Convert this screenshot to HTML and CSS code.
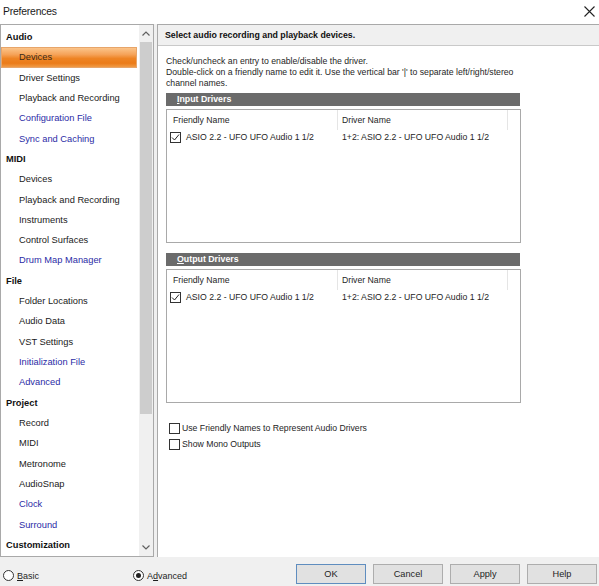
FILE: index.html
```html
<!DOCTYPE html>
<html>
<head>
<meta charset="utf-8">
<link rel="stylesheet" href="styles.css">
</head>
<body>
<div class="window">
  <div class="titlebar">
    <span class="title">Preferences</span>
    <svg class="close" width="11" height="11" viewBox="0 0 11 11"><path d="M0.5 0.5 L10.5 10.5 M10.5 0.5 L0.5 10.5" stroke="#222" stroke-width="1.1" fill="none"/></svg>
  </div>
  <div class="main">
    <div class="tree">
      <div class="tree-list">
        <div class="row head">Audio</div>
        <div class="row child selected">Devices</div>
        <div class="row child">Driver Settings</div>
        <div class="row child">Playback and Recording</div>
        <div class="row child link">Configuration File</div>
        <div class="row child link">Sync and Caching</div>
        <div class="row head">MIDI</div>
        <div class="row child">Devices</div>
        <div class="row child">Playback and Recording</div>
        <div class="row child">Instruments</div>
        <div class="row child">Control Surfaces</div>
        <div class="row child link">Drum Map Manager</div>
        <div class="row head">File</div>
        <div class="row child">Folder Locations</div>
        <div class="row child">Audio Data</div>
        <div class="row child">VST Settings</div>
        <div class="row child link">Initialization File</div>
        <div class="row child link">Advanced</div>
        <div class="row head">Project</div>
        <div class="row child">Record</div>
        <div class="row child">MIDI</div>
        <div class="row child">Metronome</div>
        <div class="row child">AudioSnap</div>
        <div class="row child link">Clock</div>
        <div class="row child link">Surround</div>
        <div class="row head">Customization</div>
      </div>
      <div class="scrollbar">
        <div class="arrow"><svg width="8" height="5" viewBox="0 0 8 5"><path d="M0.5 4.5 L4 1 L7.5 4.5" stroke="#606060" stroke-width="1.2" fill="none"/></svg></div>
        <div class="track"><div class="thumb"></div></div>
        <div class="arrow"><svg width="8" height="5" viewBox="0 0 8 5"><path d="M0.5 0.5 L4 4 L7.5 0.5" stroke="#606060" stroke-width="1.2" fill="none"/></svg></div>
      </div>
    </div>
    <div class="panel">
      <div class="panel-head">Select audio recording and playback devices.</div>
      <div class="panel-body">
        <p class="desc">Check/uncheck an entry to enable/disable the driver.<br>Double-click on a friendly name to edit it. Use the vertical bar '|' to separate left/right/stereo<br>channel names.</p>

        <div class="group-bar"><u>I</u>nput Drivers</div>
        <div class="listbox">
          <div class="list-head">
            <div class="col c1">Friendly Name</div>
            <div class="col c2">Driver Name</div>
            <div class="col c3"></div>
          </div>
          <div class="list-row">
            <div class="col c1"><span class="check on"><svg width="9" height="9" viewBox="0 0 9 9"><path d="M1 4.5 L3.5 7 L8 1.5" stroke="#222" stroke-width="1" fill="none"/></svg></span>ASIO 2.2 - UFO UFO Audio 1 1/2</div>
            <div class="col c2">1+2: ASIO 2.2 - UFO UFO Audio 1 1/2</div>
          </div>
        </div>

        <div class="group-bar out"><u>O</u>utput Drivers</div>
        <div class="listbox">
          <div class="list-head">
            <div class="col c1">Friendly Name</div>
            <div class="col c2">Driver Name</div>
            <div class="col c3"></div>
          </div>
          <div class="list-row">
            <div class="col c1"><span class="check on"><svg width="9" height="9" viewBox="0 0 9 9"><path d="M1 4.5 L3.5 7 L8 1.5" stroke="#222" stroke-width="1" fill="none"/></svg></span>ASIO 2.2 - UFO UFO Audio 1 1/2</div>
            <div class="col c2">1+2: ASIO 2.2 - UFO UFO Audio 1 1/2</div>
          </div>
        </div>

        <div class="options">
          <label class="opt"><span class="check"></span>Use Friendly Names to Represent Audio Drivers</label>
          <label class="opt"><span class="check"></span>Show Mono Outputs</label>
        </div>
      </div>
    </div>
  </div>
  <div class="bottom">
    <div class="radios">
      <label class="radio r-basic"><span class="dot"></span><u>B</u>asic</label>
      <label class="radio r-adv"><span class="dot on"></span>A<u>d</u>vanced</label>
    </div>
    <div class="buttons">
      <button class="btn default">OK</button>
      <button class="btn">Cancel</button>
      <button class="btn">Apply</button>
      <button class="btn">Help</button>
    </div>
  </div>
</div>
</body>
</html>
```
FILE: styles.css
```css
* { box-sizing: border-box; }
html, body { margin: 0; padding: 0; }
body {
  width: 599px;
  height: 586px;
  overflow: hidden;
  background: #f0f0f0;
  font-family: "Liberation Sans", Arial, sans-serif;
  color: #1e1e1e;
}
.window { width: 599px; height: 586px; display: flex; flex-direction: column; }

.titlebar {
  height: 24px;
  background: #ffffff;
  display: flex;
  align-items: center;
  justify-content: space-between;
  padding: 0 4px 1px 3px;
  flex: none;
}
.title { font-size: 10.4px; color: #1a1a1a; letter-spacing: -0.2px; }

.main { height: 533px; display: flex; flex: none; }

.tree {
  width: 154px;
  height: 533px;
  border: 1px solid #a9a9a9;
  background: #ffffff;
  display: flex;
  flex: none;
}
.tree-list { flex: 1; padding-top: 2px; overflow: hidden; }
.row {
  height: 20.32px;
  line-height: 20.32px;
  font-size: 9.3px;
  white-space: nowrap;
  color: #1a1a1a;
}
.row.head { font-weight: bold; padding-left: 5px; color: #111; }
.row.child { padding-left: 18px; }
.row.link { color: #2b2ba6; }
.row.selected {
  margin-right: 2px;
  background: linear-gradient(#fbc48a 0%, #f5a257 35%, #ee8424 55%, #eb7b18 80%, #f09a45 100%);
  border: 1px solid #e7a56a;
  line-height: 18.3px;
  padding-left: 17px;
  color: #3a2a1a;
}

.scrollbar {
  width: 14px;
  background: #f0f0f0;
  display: flex;
  flex-direction: column;
  flex: none;
}
.arrow { height: 17px; display: flex; align-items: center; justify-content: center; flex: none; }
.track { flex: 1; padding: 0 1px; }
.thumb { height: 372px; background: #cdcdcd; }

.panel {
  flex: 1;
  margin-left: 3px;
  background: #ffffff;
  border-left: 1px solid #a9a9a9;
  border-top: 1px solid #a9a9a9;
  display: flex;
  flex-direction: column;
}
.panel-head {
  height: 21px;
  background: #f0f0f0;
  border-bottom: 1px solid #c9c9c9;
  font-weight: bold;
  font-size: 8.8px;
  line-height: 20px;
  padding-left: 7px;
  color: #111;
}
.panel-body { padding: 10px 0 0 8px; }
.desc {
  margin: 0;
  font-size: 8.7px;
  line-height: 11px;
  color: #1e1e1e;
}
.group-bar {
  width: 354px;
  height: 13px;
  margin-top: 4px;
  background: #6b6b6b;
  color: #ffffff;
  font-weight: bold;
  font-size: 8.8px;
  line-height: 13px;
  padding-left: 11px;
}
.group-bar.out { margin-top: 10px; }
.listbox {
  width: 355px;
  height: 134px;
  margin-top: 3px;
  border: 1px solid #a9a9a9;
  background: #ffffff;
}
.list-head, .list-row { display: flex; font-size: 8.7px; }
.list-head { height: 20px; }
.list-head .col { line-height: 20px; border-right: 1px solid #e5e5e5; }
.list-head .c3 { border-right: none; }
.col { white-space: nowrap; }
.c1 { width: 171px; padding-left: 6px; }
.c2 { width: 170px; padding-left: 4px; }
.c3 { flex: 1; }
.list-row { height: 14px; line-height: 14px; }
.list-row .c1 { padding-left: 3px; display: flex; align-items: center; }

.check {
  width: 11px;
  height: 11px;
  border: 1px solid #333333;
  background: #ffffff;
  display: inline-flex;
  align-items: center;
  justify-content: center;
  margin-right: 5px;
  flex: none;
}
.options { margin-top: 17px; padding-left: 3px; }
.opt {
  display: flex;
  align-items: center;
  height: 16px;
  font-size: 8.7px;
  color: #1e1e1e;
}
.opt .check { margin-right: 2px; }

.bottom {
  flex: 1;
  display: flex;
  align-items: flex-start;
  justify-content: space-between;
  padding: 6px 2px 0 3px;
  border-top: 1px solid #f0f0f0;
}
.radios { display: flex; padding-top: 6px; }
.radio {
  display: flex;
  align-items: center;
  font-size: 9px;
  color: #1e1e1e;
}
.r-adv { margin-left: 94px; }
.dot {
  width: 11px;
  height: 11px;
  border: 1px solid #333333;
  border-radius: 50%;
  background: #ffffff;
  margin-right: 3px;
  display: inline-flex;
  align-items: center;
  justify-content: center;
}
.dot.on::after {
  content: "";
  width: 5px;
  height: 5px;
  border-radius: 50%;
  background: #222;
}
.buttons { display: flex; gap: 7px; }
.btn {
  width: 70px;
  height: 20px;
  background: #e1e1e1;
  border: 1px solid #adadad;
  font-family: "Liberation Sans", Arial, sans-serif;
  font-size: 9.2px;
  color: #1e1e1e;
  padding: 0;
}
.btn.default { border-color: #5f8dbf; }
```
